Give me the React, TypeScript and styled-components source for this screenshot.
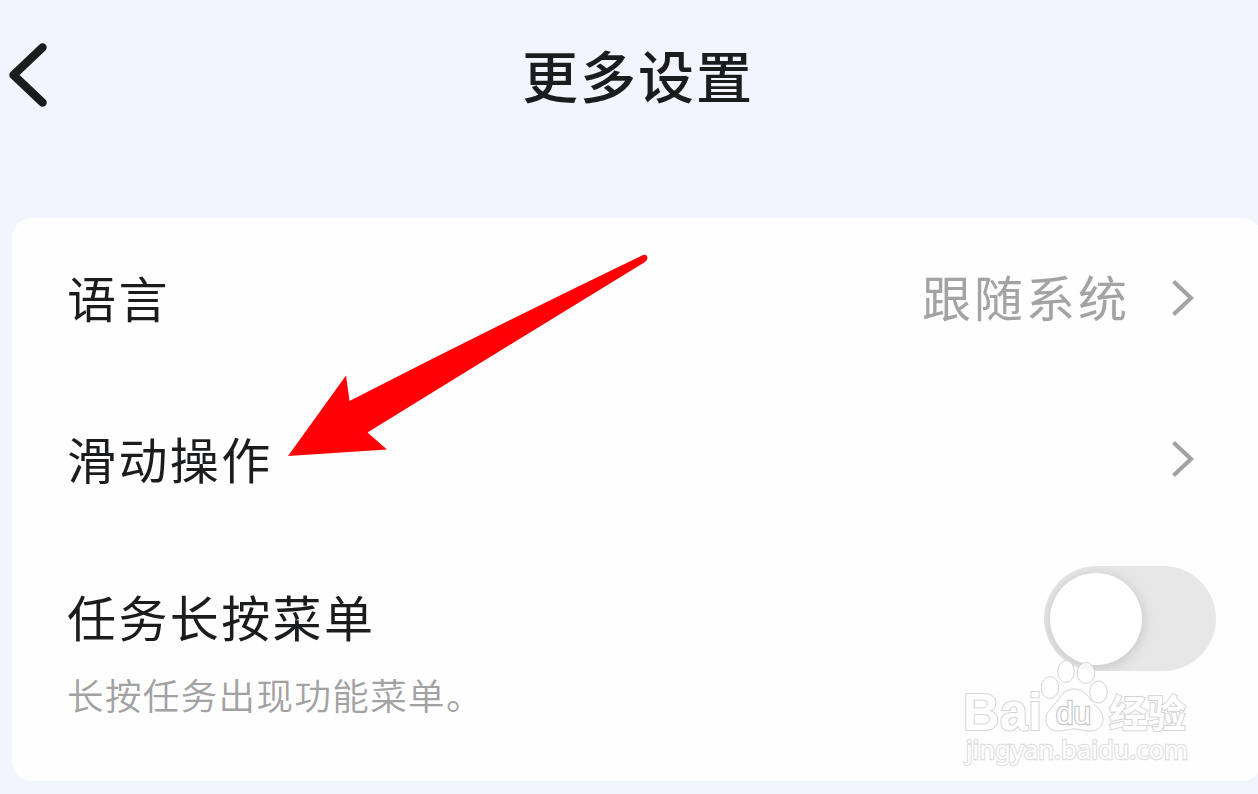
import React from 'react';
import styled, { createGlobalStyle } from 'styled-components';

const GlobalStyle = createGlobalStyle`
    * {
        box-sizing: border-box;
    }
    body {
        margin: 0;
        background-color: #f2f5fe;
        overflow: hidden;
        font-family: 'Noto Sans CJK SC', 'Noto Sans', sans-serif;
        color: #1b1c1e;
    }
`;

const Screen = styled.div`
    position: relative;
    display: flex;
    flex-direction: column;
    height: 794px;
    overflow: hidden;
`;

const Header = styled.header`
    display: grid;
    grid-template-columns: 60px 1fr 60px;
    align-items: start;
    height: 218px;
    padding-top: 34px;
`;

const BackButton = styled.button`
    display: flex;
    width: 60px;
    height: 82px;
    padding: 0;
    border: 0;
    background: none;
    color: #1b1c1e;
`;

const Title = styled.h1`
    margin: 0;
    padding-left: 18px;
    font-size: 56px;
    font-weight: 500;
    line-height: 80px;
    letter-spacing: 2px;
    text-align: center;
`;

const Card = styled.main`
    display: flex;
    flex-direction: column;
    flex: none;
    width: 1250px;
    height: 563px;
    margin-left: 12px;
    padding: 0 46px 0 55px;
    border-radius: 20px;
    background-color: #fefefe;
`;

const Row = styled.div`
    display: flex;
    align-items: center;
    justify-content: space-between;
    height: 161px;
    padding-bottom: 2px;
`;

const SwitchRow = styled(Row)`
    align-items: flex-start;
    height: 241px;
    padding-top: 26px;
`;

const SwitchText = styled.div`
    padding-top: 16px;
`;

const Label = styled.div`
    margin-top: -2px;
    font-size: 49px;
    line-height: 72px;
    letter-spacing: 2.4px;
`;

const Description = styled.div`
    margin-top: 16px;
    font-size: 36.5px;
    font-weight: 350;
    line-height: 54px;
    letter-spacing: 1.4px;
    color: #a2a2a2;
`;

const RowEnd = styled.div`
    display: flex;
    align-items: center;
    gap: 41px;
    padding-right: 21px;
`;

const Value = styled.span`
    margin-top: -4px;
    font-size: 49px;
    line-height: 72px;
    letter-spacing: 3px;
    color: #a3a3a3;
`;

const Toggle = styled.button`
    display: flex;
    align-items: center;
    width: 172px;
    height: 105px;
    padding: 0 6px;
    border: 0;
    border-radius: 53px;
    background-color: #e7e7e7;
    overflow: hidden;
`;

const Knob = styled.span`
    width: 92px;
    height: 92px;
    border-radius: 50%;
    background-color: #fff;
    box-shadow: 0 2px 14px rgba(0, 0, 0, 0.16);
`;

const PointerArrow = styled.svg`
    position: absolute;
    top: 250px;
    left: 284px;
`;

const Watermark = styled.svg`
    position: absolute;
    top: 654px;
    left: 958px;
`;

const Chevron = () => (
    <svg width="24" height="40" viewBox="0 0 24 40" fill="none" stroke="#a3a3a3" strokeWidth="4.2">
        <path d="M2.5 3.5 L20 20 L2.5 36.5" />
    </svg>
);

const BaiduWatermark = () => (
    <Watermark width="236" height="130" fill="#fff" stroke="#d4d4d4" strokeWidth="1">
        <g paintOrder="stroke" strokeWidth="2">
            <text
                x="5"
                y="75.5"
                fontSize="51"
                fontFamily="'Liberation Sans', Arial, sans-serif"
                fontWeight="700"
                textLength="79"
                lengthAdjust="spacingAndGlyphs"
            >
                Bai
            </text>
            <text
                x="151"
                y="72.5"
                fontSize="38"
                fontFamily="'Noto Sans CJK SC', sans-serif"
                fontWeight="700"
                textLength="77"
                lengthAdjust="spacingAndGlyphs"
            >
                经验
            </text>
        </g>
        <ellipse cx="92" cy="33.5" rx="8.8" ry="11" />
        <ellipse cx="108" cy="17.5" rx="8.2" ry="11" />
        <ellipse cx="128" cy="19" rx="8.8" ry="10.5" fillOpacity="0.8" />
        <ellipse cx="140.5" cy="38" rx="8.8" ry="11" />
        <path d="M116 35 C123 35 128 39 132 45 C137 52 145 56 145 65 C145 72 140 77 132 77 C126 77 122 75 116 75 C110 75 106 77 100 77 C92 77 88 72 88 65 C88 57 95 53 100 46 C104 40 108 35 116 35 Z" />
        <text
            x="98"
            y="70"
            fontSize="32"
            fontFamily="'Liberation Sans', Arial, sans-serif"
            paintOrder="stroke"
            strokeWidth="2.4"
            textLength="35"
            lengthAdjust="spacingAndGlyphs"
            stroke="#c6c6c6"
        >
            du
        </text>
        <text
            x="8"
            y="105"
            fontSize="25.5"
            fontFamily="'Noto Sans', sans-serif"
            paintOrder="stroke"
            stroke="#e0e0e0"
            strokeWidth="2.4"
            textLength="222"
            lengthAdjust="spacingAndGlyphs"
        >
            jingyan.baidu.com
        </text>
    </Watermark>
);

const App: React.FC = () => {
    return (
        <>
            <GlobalStyle />
            <Screen>
                <Header>
                    <BackButton aria-label="返回">
                        <svg width="60" height="82" fill="none" stroke="currentColor">
                            <path
                                d="M42.5 13.5 L13.5 41 L42.5 68.5"
                                strokeWidth="8.5"
                                strokeLinecap="round"
                                strokeLinejoin="round"
                            />
                        </svg>
                    </BackButton>
                    <Title>更多设置</Title>
                </Header>
                <Card>
                    <Row>
                        <Label>语言</Label>
                        <RowEnd>
                            <Value>跟随系统</Value>
                            <Chevron />
                        </RowEnd>
                    </Row>
                    <Row>
                        <Label>滑动操作</Label>
                        <RowEnd>
                            <Chevron />
                        </RowEnd>
                    </Row>
                    <SwitchRow>
                        <SwitchText>
                            <Label>任务长按菜单</Label>
                            <Description>长按任务出现功能菜单。</Description>
                        </SwitchText>
                        <Toggle role="switch" aria-checked="false">
                            <Knob />
                        </Toggle>
                    </SwitchRow>
                </Card>
                <PointerArrow width="370" height="215" fill="#ff0007">
                    <path d="M4 206 L62 125.5 L65.5 151 Q210 77 359 5 Q363 4 363.5 8 Q363.5 10 361 12 Q224 96 83.5 182.5 L103 199.5 Z" />
                </PointerArrow>
                <BaiduWatermark />
            </Screen>
        </>
    );
};

export default App;
